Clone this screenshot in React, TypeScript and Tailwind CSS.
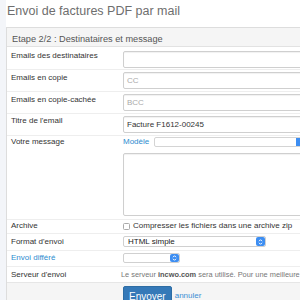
import React from 'react';

function SelectArrow() {
  return (
    <div className="flex h-full w-[9px] shrink-0 items-center justify-center rounded-[2px] bg-[#3d8ef2]">
      <svg width="5" height="8" viewBox="0 0 5 8" fill="none" stroke="white" strokeWidth="1">
        <path d="M1 3.2 L2.5 1.7 L4 3.2" />
        <path d="M1 4.8 L2.5 6.3 L4 4.8" />
      </svg>
    </div>
  );
}

function TextInput({ value, placeholder }: { value?: string; placeholder?: string }) {
  return (
    <div className="flex h-[17px] w-[200px] items-center rounded-[2px] border border-[#cfcfcf] bg-white px-[3px] text-[8px] leading-[10px] shadow-[inset_0_1px_1px_rgba(0,0,0,0.06)]">
      {value ? <span className="text-[#333]">{value}</span> : <span className="text-[#aaa]">{placeholder}</span>}
    </div>
  );
}

export default function App() {
  return (
    <div className="flex h-[300px] w-[300px] overflow-hidden bg-white font-['Liberation_Sans',Arial,sans-serif]">
      {/* left strip */}
      <div className="w-[6px] shrink-0 bg-[#f3f5f9]" />

      <div className="flex w-[330px] shrink-0 flex-col">
        {/* breadcrumb cut off at top */}
        <div className="h-[2px] overflow-hidden pl-[1px]">
          <div className="-mt-[7px] text-[8px] leading-[9px] text-[#bbb]">Factures › Envoi</div>
        </div>

        <h1 className="mt-[3px] mb-[8px] pl-[1px] text-[12.5px] font-light leading-[16px] text-[#6e6e6e]">
          Envoi de factures PDF par mail
        </h1>

        <div className="flex-1 border border-[#dddddd]">
          {/* header */}
          <div className="border-b border-[#e2e2e2] bg-[#f5f5f5] px-[5px] pt-[5px] pb-[1px] text-[9.2px] leading-[12px] text-[#555]">
            Etape 2/2 : Destinataires et message
          </div>

          {/* Emails des destinataires */}
          <div className="grid grid-cols-[116px_1fr] pt-[4px] pb-[1px]">
            <div className="pl-[4px] text-[8px] leading-[10px] text-[#333]">Emails des destinataires</div>
            <TextInput />
          </div>

          <div className="grid grid-cols-[116px_1fr] border-t border-[#eeeeee] py-[2px]">
            <div className="pl-[4px] pt-[1px] text-[8px] leading-[10px] text-[#333]">Emails en copie</div>
            <TextInput placeholder="CC" />
          </div>

          <div className="grid grid-cols-[116px_1fr] border-t border-[#eeeeee] py-[2px]">
            <div className="pl-[4px] pt-[1px] text-[8px] leading-[10px] text-[#333]">Emails en copie-cachée</div>
            <TextInput placeholder="BCC" />
          </div>

          <div className="grid grid-cols-[116px_1fr] border-t border-[#eeeeee] py-[2px]">
            <div className="pl-[4px] text-[8px] leading-[10px] text-[#333]">Titre de l'email</div>
            <TextInput value="Facture F1612-00245" />
          </div>

          {/* Votre message */}
          <div className="grid grid-cols-[116px_1fr] border-t border-[#eeeeee] pt-[1px] pb-[3px]">
            <div className="pl-[4px] text-[8px] leading-[10px] text-[#333]">Votre message</div>
            <div className="flex flex-col">
              <div className="flex h-[10px] items-center gap-[5px]">
                <span className="text-[8px] leading-[10px] text-[#2d8ccf]">Modèle</span>
                <div className="flex h-[10px] w-[152px] rounded-[2px] border border-[#d4d4d4] bg-white">
                  <div className="flex-1" />
                  <div className="w-[9px] rounded-r-[2px] bg-[#3d8ef2]" />
                </div>
              </div>
              <div className="mt-[6px] h-[63px] w-[200px] rounded-[2px] border border-[#cfcfcf] bg-white shadow-[inset_0_1px_1px_rgba(0,0,0,0.06)]" />
            </div>
          </div>

          {/* Archive */}
          <div className="grid grid-cols-[116px_1fr] border-t border-[#eeeeee] pt-[1px] pb-[2px]">
            <div className="pl-[4px] text-[8px] leading-[10px] text-[#333]">Archive</div>
            <div className="flex items-center gap-[3px] text-[8px] leading-[10px] text-[#333]">
              <span className="inline-block h-[7px] w-[7px] rounded-[1.5px] border border-[#aaa] bg-white" />
              <span>Compresser les fichiers dans une archive zip</span>
            </div>
          </div>

          {/* Format d'envoi */}
          <div className="grid grid-cols-[116px_1fr] border-t border-[#eeeeee] pt-[2px] pb-[3px]">
            <div className="pl-[4px] pt-[1px] text-[8px] leading-[10px] text-[#333]">Format d'envoi</div>
            <div className="flex h-[11px] w-[143px] items-center rounded-[2px] border border-[#d0d0d0] bg-white">
              <span className="flex-1 pl-[4px] text-[8px] leading-[9px] text-[#222]">HTML simple</span>
              <SelectArrow />
            </div>
          </div>

          {/* Envoi différé */}
          <div className="grid grid-cols-[116px_1fr] border-t border-[#eeeeee] pt-[2px] pb-[3px]">
            <div className="pl-[4px] text-[8px] leading-[10px] text-[#2d8ccf]">Envoi différé</div>
            <div className="flex h-[10px] w-[57px] items-center rounded-[2px] border border-[#d0d0d0] bg-white">
              <span className="flex-1" />
              <SelectArrow />
            </div>
          </div>

          {/* Serveur d'envoi */}
          <div className="grid grid-cols-[116px_1fr] border-t border-[#eeeeee] pt-[3px] pb-[2px]">
            <div className="pl-[4px] text-[8px] leading-[10px] text-[#333]">Serveur d'envoi</div>
            <div className="-ml-[2px] whitespace-nowrap text-[7.4px] leading-[10px] text-[#777]">
              Le serveur <b className="text-[#555]">incwo.com</b> sera utilisé. Pour une meilleure délivrabilité
            </div>
          </div>

          {/* footer */}
          <div className="grid h-[40px] grid-cols-[116px_1fr] border-t border-[#e6e6e6] bg-[#f5f5f5] pt-[3px]">
            <div />
            <div className="flex items-start gap-[3px]">
              <button className="h-[20px] rounded-[2px] border border-[#2e6da4] bg-[#3579b8] px-[5px] pt-[2px] text-[10px] leading-[12px] text-white">
                Envoyer
              </button>
              <span className="pt-[5px] text-[8px] leading-[10px] text-[#3d8fd4]">annuler</span>
            </div>
          </div>
        </div>
      </div>
    </div>
  );
}
